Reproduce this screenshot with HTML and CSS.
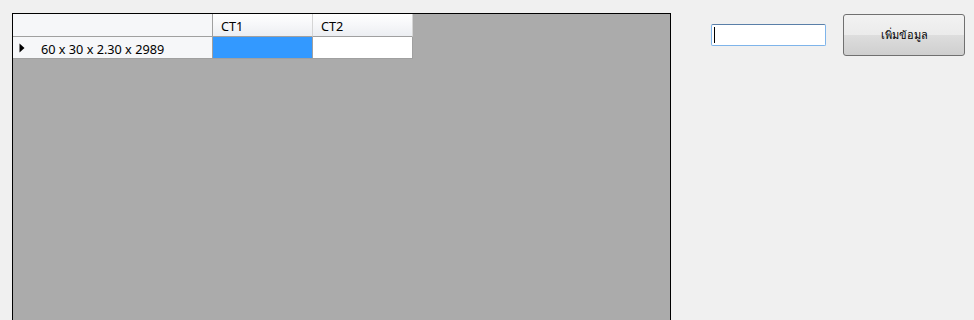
FILE: index.html
```html
<!DOCTYPE html>
<html>
<head>
<meta charset="utf-8">
<link rel="stylesheet" href="styles.css">
</head>
<body>
<div class="form">
  <div class="grid">
    <div class="hdr corner"></div>
    <div class="hdr col">CT1</div>
    <div class="hdr col">CT2</div>
    <div class="rowhdr">
      <svg class="arrow" width="6" height="10" viewBox="0 0 6 10"><path d="M0.5 0.5 L5.5 5 L0.5 9.5 Z" fill="#000"/></svg>
      <span class="rowtext">60 x 30 x 2.30 x 2989</span>
    </div>
    <div class="cell selected"></div>
    <div class="cell"></div>
  </div>
  <div class="side">
    <div class="textbox"><span class="caret"></span></div>
    <button class="btn">เพิ่มข้อมูล</button>
  </div>
</div>
</body>
</html>
```
FILE: styles.css
```css
html, body {
  margin: 0;
  padding: 0;
  background: #f0f0f0;
  font-family: "Noto Sans", "DejaVu Sans", "Noto Sans CJK SC", sans-serif;
  font-size: 12.7px;
  overflow: hidden;
}
.form {
  display: flex;
  align-items: flex-start;
  padding: 13px 0 0 12px;
  height: 320px;
  box-sizing: border-box;
}
.grid {
  width: 659px;
  height: 307px;
  box-sizing: border-box;
  border: 1px solid #000;
  border-bottom: 0;
  background: #ababab;
  display: grid;
  grid-template-columns: 200px 100px 100px;
  grid-template-rows: 23px 22px;
  align-content: start;
}
.hdr {
  background: linear-gradient(#ffffff 0%, #f6f7f9 50%, #eceef2 100%);
  border-right: 1px solid #d5d5d5;
  border-bottom: 1px solid #a0a0a0;
  box-sizing: border-box;
  color: #000;
  display: flex;
  align-items: center;
  padding-left: 8px;
  padding-top: 2px;
}
.corner {
  background: #f6f7f9;
  border-right: 1px solid #a0a0a0;
}
.rowhdr {
  background: #f6f7f9;
  border-right: 1px solid #a0a0a0;
  border-bottom: 1px solid #a0a0a0;
  box-sizing: border-box;
  display: flex;
  align-items: center;
  padding-left: 6px;
  padding-top: 2px;
}
.arrow {
  margin-right: 16px;
  margin-top: -2px;
}
.rowtext {
  color: #000;
}
.cell {
  background: #fff;
  border-right: 1px solid #a0a0a0;
  border-bottom: 1px solid #a0a0a0;
  box-sizing: border-box;
}
.cell.selected {
  background: #3399ff;
}
.side {
  display: flex;
  align-items: flex-start;
  margin-left: 40px;
  margin-top: 1px;
}
.textbox {
  width: 115px;
  height: 22px;
  margin-top: 10px;
  box-sizing: border-box;
  background: #fff;
  border: 1px solid #7eb4ea;
  border-top-color: #5a7fa8;
  border-radius: 2px;
  display: flex;
  align-items: center;
  padding-left: 2px;
}
.caret {
  width: 1px;
  height: 16px;
  background: #000;
}
.btn {
  margin-left: 17px;
  width: 122px;
  height: 42px;
  box-sizing: border-box;
  border: 1px solid #707070;
  border-radius: 3px;
  background: linear-gradient(#f2f2f2 0%, #ebebeb 50%, #dddddd 51%, #cfcfcf 100%);
  font-family: "Noto Sans", "DejaVu Sans", sans-serif;
  font-size: 11px;
  color: #000;
  padding: 0;
}
```
